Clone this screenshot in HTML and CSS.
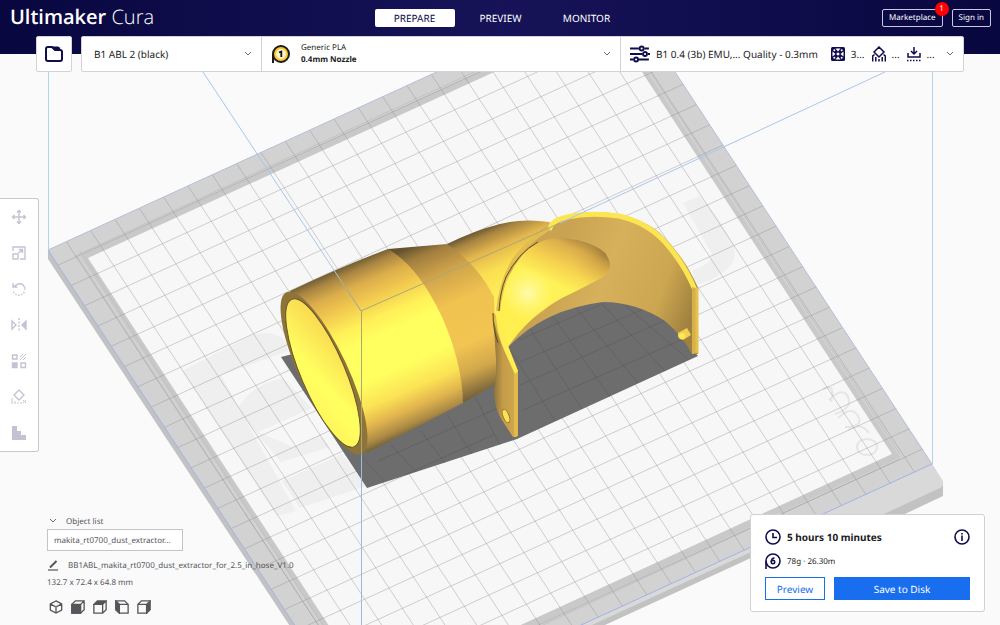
FILE: index.html
```html
<!DOCTYPE html>
<html lang="en">
<head>
<meta charset="utf-8">
<meta name="viewport" content="width=device-width, initial-scale=1">
<title>Ultimaker Cura</title>
<link rel="stylesheet" href="styles.css">
</head>
<body>
<div class="app">
  <svg class="scene" viewBox="0 0 1000 625" preserveAspectRatio="xMidYMid slice" role="img" aria-label="Build plate with a yellow dust extractor model">
    <defs>
      <path id="rows" d="M0 .75h23.5m-23.5 1h23.5m-23.5 1h23.5m-23.5 1h23.5m-23.5 1h23.5m-23.5 1h23.5m-23.5 1h23.5m-23.5 1h23.5m-23.5 1h23.5m-23.5 1h23.5m-23.5 1h23.5m-23.5 1h23.5m-23.5 1h23.5m-23.5 1h23.5m-23.5 1h23.5m-23.5 1h23.5m-23.5 1h23.5m-23.5 1h23.5m-23.5 1h23.5m-23.5 1h23.5m-23.5 1h23.5m-23.5 1h23.5m-23.5 1h23.5" vector-effect="non-scaling-stroke"/>
      <linearGradient id="tube" gradientUnits="userSpaceOnUse" x1="335" y1="270" x2="406" y2="434">
        <stop offset="0" stop-color="#6f5b32"/><stop offset=".05" stop-color="#a98542"/><stop offset=".13" stop-color="#dcae4b"/><stop offset=".22" stop-color="#f1c84f"/><stop offset=".34" stop-color="#fff058"/><stop offset=".44" stop-color="#ffff60"/><stop offset=".64" stop-color="#ffff60"/><stop offset=".78" stop-color="#fbe355"/><stop offset=".88" stop-color="#e2b54e"/><stop offset=".96" stop-color="#ad8b46"/><stop offset="1" stop-color="#7d683a"/>
      </linearGradient>
      <linearGradient id="cone" gradientUnits="userSpaceOnUse" x1="417" y1="244" x2="480" y2="394">
        <stop offset="0" stop-color="#65532f"/><stop offset=".08" stop-color="#a17e3f"/><stop offset=".22" stop-color="#cfa34b"/><stop offset=".42" stop-color="#f0c250"/><stop offset=".68" stop-color="#f2c552"/><stop offset=".85" stop-color="#d2a74b"/><stop offset="1" stop-color="#77633a"/>
      </linearGradient>
      <linearGradient id="neck" gradientUnits="userSpaceOnUse" x1="488" y1="224" x2="520" y2="300">
        <stop offset="0" stop-color="#5c4c2d"/><stop offset=".12" stop-color="#a78442"/><stop offset=".3" stop-color="#e3b64d"/><stop offset=".55" stop-color="#fbe051"/><stop offset="1" stop-color="#fff45a"/>
      </linearGradient>
      <linearGradient id="bore" gradientUnits="userSpaceOnUse" x1="298" y1="300" x2="350" y2="445">
        <stop offset="0" stop-color="#e3b54b"/><stop offset=".25" stop-color="#f8d64f"/><stop offset=".55" stop-color="#ffff60"/><stop offset=".78" stop-color="#fff45a"/><stop offset="1" stop-color="#e5bd4d"/>
      </linearGradient>
      <linearGradient id="hood" gradientUnits="userSpaceOnUse" x1="560" y1="250" x2="698" y2="300">
        <stop offset="0" stop-color="#c9a351"/><stop offset=".35" stop-color="#d6b05a"/><stop offset=".75" stop-color="#cca650"/><stop offset="1" stop-color="#a08040"/>
      </linearGradient>
      <linearGradient id="elbow" gradientUnits="userSpaceOnUse" x1="575" y1="238" x2="533" y2="330">
        <stop offset="0" stop-color="#b08a42"/><stop offset=".1" stop-color="#dcae4b"/><stop offset=".3" stop-color="#f6d24f"/><stop offset=".5" stop-color="#fff258"/><stop offset="1" stop-color="#fff04f"/>
      </linearGradient>
      <radialGradient id="shade" gradientUnits="userSpaceOnUse" cx="614" cy="250" r="44">
        <stop offset="0" stop-color="#725a30" stop-opacity=".75"/><stop offset=".5" stop-color="#b98e40" stop-opacity=".3"/><stop offset="1" stop-color="#e0b050" stop-opacity="0"/>
      </radialGradient>
      <radialGradient id="glow" gradientUnits="userSpaceOnUse" cx="528" cy="293" r="26">
        <stop offset="0" stop-color="#fffbb0"/><stop offset="1" stop-color="#fff878" stop-opacity="0"/>
      </radialGradient>
      <linearGradient id="leg" x1="0" x2="1" y1="0" y2="0">
        <stop offset="0" stop-color="#8b7038"/><stop offset=".4" stop-color="#c39b49"/><stop offset="1" stop-color="#d2a94d"/>
      </linearGradient>
    </defs>

    <!-- plate -->
    <path fill="#c2c2c2" d="M48 250v9L361 734 605 625 740 563 800 535 850 540 943 496V482L932 464z"/>
    <path fill="#d9d9d9" d="M932 464 943 481Q944 486 940 488L860 525 800 530 740 557 361 731V726z"/>
    <path fill="#d2d2d2" d="M48 250 620-12 932 464 361 726z"/>
    <path fill="none" stroke="#c9c9c9" stroke-width="7" d="M85 257 607 17 895 456 373 697z"/>
    <path fill="none" stroke="#c2c2c2" d="M75 256 609 10M80 251 373 702M900 454 611 12M373 704 900 459M77 256 370 704"/>
    <path fill="#f7f7f7" d="M88 258 608 20 892 454 373 693z"/>
    <g fill="#efefef">
      <path d="M182 371 250 336Q274 328 286 342L288 351 221 375 296 511 277 516z"/>
      <path d="M237 410Q250 385 283 378L312 408 258 432 293 447 320 435 330 447 281 462z"/>
      <path d="M282 481 342 454 366 486 300 508z"/>
      <path d="M683 203 700 196Q742 245 733 262 722 278 696 285L692 270Q711 265 712 254z"/>
    </g>
    <g fill="none" stroke="#e6e6e6" stroke-width="2">
      <path d="M823 389Q836 382 831 402M829 400Q843 386 848 397T835 414M838 418Q852 405 858 416T845 427M848 430Q860 421 869 433"/>
      <ellipse cx="867" cy="447" rx="10" ry="8"/>
    </g>
    <g transform="matrix(24.34 -11.15 13.32 20.26 48 250)" fill="none" stroke="#8e8e8e" stroke-opacity=".4" stroke-width="1">
      <use href="#rows"/>
      <use href="#rows" transform="matrix(0 1 1 0 0 0)"/>
    </g>
    <path fill="none" stroke="#a3b3e8" d="M48 250 361 726 932 464"/>
    <path fill="none" stroke="#b4bed6" d="M48 250 620-12 932 464"/>

    <!-- shadow -->
    <path fill="#6d6d6d" d="M281 357 560 285 650 300 698 356 517 439 367 488z"/>
    <path fill="none" stroke="#525252" stroke-opacity=".4" d="M361 456 384 481M391 445 416 472M420 430 445 463M447 415 472 454M475 397 500 445M511 351 555 421M530 329 582 409M552 315 610 397M575 307 638 383M601 303 665 371M625 305 688 359M378 461 500 407M405 475 495 434M520 385 690 309M520 362 660 302M523 410 690 336M519 340 600 305"/>

    <!-- tube -->
    <path fill="url(#neck)" d="M447 244Q476 230 500 224 524 218 549 222L560 228 545 300 494 345 480 300z"/>
    <path fill="url(#cone)" d="M388 249 447 244Q478 265 494 297L497 383 463 403 430 330z"/>
    <path fill="url(#tube)" d="M290 291Q340 267 388 249 418 266 442 317 462 362 463 403L367 453 310 380z"/>
    <ellipse cx="324" cy="373" rx="89" ry="24" transform="rotate(65 324 373)" fill="#8e7438"/>
    <ellipse cx="323" cy="373" rx="80" ry="22" transform="rotate(67 323 373)" fill="url(#bore)" stroke="#6b562c"/>

    <!-- hood -->
    <path fill="url(#hood)" d="M498 312Q500 285 515 258 530 238 548 225 570 212 600 212 637 214 660 233 685 257 698 288V354L692 354Q683 336 665 321 636 302 603 302 545 309 508 347z"/>
    <path fill="url(#elbow)" d="M497 313Q501 282 523 254 539 237 563 238 592 241 605 253 616 268 603 277 585 287 562 298 528 317 508 347L495 330z"/>
    <path fill="url(#shade)" d="M540 243Q551 237 563 238 592 241 605 253 616 268 603 277L560 298z"/>
    <circle cx="528" cy="293" r="26" fill="url(#glow)"/>
    <path fill="none" stroke="#fbe651" stroke-width="5" stroke-linejoin="round" d="M549 230Q552 220 567 217 590 212 619 216 646 222 664 241 684 263 695 290"/>
    <path fill="#d7b04c" d="M692 287 698 289V353L692 354z"/>
    <path fill="none" stroke="#e6c04c" stroke-width="3" d="M697 288V353"/>
    <path fill="none" stroke="#e2bd4d" stroke-width="4" d="M549 228Q526 243 514 260 501 282 498 311"/>
    <path fill="none" stroke="#5d4a26" stroke-width="1" d="M538 242Q518 253 506 277 500 292 499 311"/>
    <path fill="#f3d14e" d="M678 333 687 328 691 335 683 340Q677 339 678 333z"/>
    <circle cx="682" cy="336" r="3" fill="#ffe850"/>

    <!-- front leg -->
    <path fill="url(#leg)" d="M493 313 505 347 517 372V437H513L500 417Q494 405 494 390L497 373z"/>
    <path fill="#e0ba4a" d="M495 313 500 330 508 346 518 371V436L514 437V373L504 350Q495 330 493 316z"/>
    <path fill="#ffed52" d="M496 311 508 346 518 371 515 374 505 352Q496 332 496 311z"/>
    <path fill="none" stroke="#5d4a26" d="M493 313Q493 330 498 343"/>
    <ellipse cx="506" cy="416" rx="3" ry="7" transform="rotate(-22 506 416)" fill="#f9e352" stroke="#97793a"/>

    <!-- build volume -->
    <path fill="none" stroke="#b3d2ea" d="M48.500 72V250M932.500 72V464"/>
    <path fill="none" stroke="#aac5ec" d="M203 72 361 311M560 223 885 72"/>
    <path fill="none" stroke="#a9a878" d="M338 276 361 311 560 223M361.500 311V455"/>
    <path fill="none" stroke="#93bde4" d="M361.500 455V625"/>
  </svg>

  <header class="header">
    <h1 class="brand">Ultimaker <span class="brand-light">Cura</span></h1>
    <nav class="stages" aria-label="Stages">
      <button class="stage stage-active" type="button">PREPARE</button>
      <button class="stage" type="button">PREVIEW</button>
      <button class="stage" type="button">MONITOR</button>
    </nav>
    <div class="account">
      <button class="outline-btn" type="button">Marketplace<span class="badge">1</span></button>
      <button class="outline-btn" type="button">Sign in</button>
    </div>
  </header>

  <section class="setup" aria-label="Print setup">
    <button class="open-file" type="button" aria-label="Open file">
      <svg class="icon-folder" viewBox="0 0 20 18"><path d="M2 4Q2 2 4 2H8L11 5H16Q18 5 18 7V14Q18 16 16 16H4Q2 16 2 14z"/><path d="M8 2H14Q16 2 16 5H11z" fill="currentColor" stroke-width="1"/></svg>
    </button>
    <div class="setup-bar">
      <button class="setup-item printer" type="button">
        <span class="printer-name">B1 ABL 2 (black)</span>
        <svg class="chevron" viewBox="0 0 8 6"><path d="M1 1 4 4 7 1"/></svg>
      </button>
      <button class="setup-item material" type="button">
        <svg class="icon-spool" viewBox="0 0 20 20"><path d="M2 10V19" stroke="#1d1b18" stroke-width="2"/><circle cx="10" cy="10" r="8" fill="#ffc72e" stroke="#1d1b18" stroke-width="2"/><circle cx="10" cy="10" r="5" fill="#fff4d0" stroke="none"/><path d="M8 8.500 10.300 7.500V13" fill="none" stroke="#111" stroke-width="1.800"/></svg>
        <span class="material-text"><span>Generic PLA</span><strong>0.4mm Nozzle</strong></span>
        <svg class="chevron" viewBox="0 0 8 6"><path d="M1 1 4 4 7 1"/></svg>
      </button>
      <button class="setup-item profile" type="button">
        <svg class="icon-sliders" viewBox="0 0 18 16"><path d="M0 3H8M13 3H17M0 8H11M16 8H18M0 13H3M8 13H17"/><circle cx="10.500" cy="3" r="1.800"/><circle cx="13.500" cy="8" r="1.800"/><circle cx="5.500" cy="13" r="1.800"/></svg>
        <span class="profile-name">B1 0.4 (3b) EMU,... Quality - 0.3mm</span>
        <svg class="icon-small" viewBox="0 0 14 14"><rect width="14" height="14" rx="1.500" fill="currentColor" stroke="none"/><g fill="#fff" stroke="none"><path d="M4.500 1.500H9.500L7 4.500zM4.500 12.500H9.500L7 9.500zM1.500 4.500V9.500L4.500 7zM12.500 4.500V9.500L9.500 7z"/><path d="M7 5.200 8.800 7 7 8.800 5.200 7z"/><circle cx="3.300" cy="3.300" r="1"/><circle cx="10.700" cy="3.300" r="1"/><circle cx="3.300" cy="10.700" r="1"/><circle cx="10.700" cy="10.700" r="1"/></g></svg>
        <span class="summary">3...</span>
        <svg class="icon-small" viewBox="0 0 14 16"><path d="M7 1 12 6 7 11 2 6zM.7 15.500V10L2.500 8.500M13.300 15.500V10L11.500 8.500M3.800 11V15.500M7 13V15.500M10.200 11V15.500"/></svg>
        <span class="summary">...</span>
        <svg class="icon-small" viewBox="0 0 14 16"><path d="M7 1V8M4 5 7 8 10 5M1 7V11H13V7"/><path d="M0 14.500H14" stroke-dasharray="1.500 1.500"/></svg>
        <span class="summary">...</span>
        <svg class="chevron" viewBox="0 0 8 6"><path d="M1 1 4 4 7 1"/></svg>
      </button>
    </div>
  </section>

  <main class="workspace">
    <div class="tools" role="toolbar" aria-label="Tools">
      <button class="tool" type="button" aria-label="Move"><svg viewBox="0 0 16 16"><path d="M8 1.500V14.500M1.500 8H14.500M6 3.500 8 1.500 10 3.500M6 12.500 8 14.500 10 12.500M3.500 6 1.500 8 3.500 10M12.500 6 14.500 8 12.500 10"/></svg></button>
      <button class="tool" type="button" aria-label="Scale"><svg viewBox="0 0 16 16"><path d="M2 6V2H14V14H9M2 9H7V14H2zM7.500 8 11.500 4.500M8 4.500H11.500V8"/></svg></button>
      <button class="tool" type="button" aria-label="Rotate"><svg viewBox="0 0 16 16"><path d="M2 2V6H6.500M3 5.500Q8 1 12 4 14.500 6.500 14 9"/><path d="M13.500 11Q8 17 3 12L2 9" stroke-dasharray="1.500 1.500"/></svg></button>
      <button class="tool" type="button" aria-label="Mirror"><svg viewBox="0 0 16 16"><path d="M1 4 5 8 1 12z"/><path d="M15 4 11 8 15 12z" fill="currentColor"/><path d="M8 1V15" stroke-dasharray="2 1.500"/></svg></button>
      <button class="tool" type="button" aria-label="Per model settings"><svg viewBox="0 0 16 16"><path d="M1.500 2H6V6H1.500zM10 10H14.500V14.500H10z"/><path d="M1.500 10H6V14.500H1.500z" fill="currentColor"/><path d="M9 4 12 1M9 7 15 1M12 7 15 4" stroke-width="1"/></svg></button>
      <button class="tool" type="button" aria-label="Support blocker"><svg viewBox="0 0 16 16"><path d="M8 1 13 6 8 11 3 6z"/><path d="M1 9V15M4 12V15M7 13V15M10 13V15M12 11 15 14M15 11 12 14" stroke-width="1"/></svg></button>
      <button class="tool" type="button" aria-label="Layer steps"><svg viewBox="0 0 16 16"><path d="M1 1H6V6H10V10H15V15H1z" fill="currentColor" stroke="none"/></svg></button>
    </div>

    <div class="bottom">
      <section class="objects" aria-label="Objects">
        <button class="list-toggle" type="button"><svg class="chevron" viewBox="0 0 8 6"><path d="M1 1 4 4 7 1"/></svg>Object list</button>
        <button class="object-item" type="button">makita_rt0700_dust_extractor...</button>
        <button class="job-name" type="button"><svg class="icon-pencil" viewBox="0 0 12 12"><path d="M1 11H11" stroke-width="1.200"/><path d="M3 8.500 9.500 2" stroke-width="2"/></svg>BB1ABL_makita_rt0700_dust_extractor_for_2.5_in_hose_V1.0</button>
        <p class="dimensions">132.7 x 72.4 x 64.8 mm</p>
        <div class="views">
          <button class="view" type="button" aria-label="3D view"><svg viewBox="0 0 16 16"><path d="M8 1 14.500 4.500V11.500L8 15 1.500 11.500V4.500zM1.500 4.500 8 8 14.500 4.500M8 8V15"/></svg></button>
          <button class="view" type="button" aria-label="Front view"><svg viewBox="0 0 16 16"><path d="M1 5 5 1H15V11L11 15H1zM11 5 15 1"/><path d="M1 5H11V15H1z" fill="currentColor"/></svg></button>
          <button class="view" type="button" aria-label="Top view"><svg viewBox="0 0 16 16"><path d="M1 5V15H11L15 11V1M11 5V15"/><path d="M1 5 5 1H15L11 5z" fill="currentColor"/></svg></button>
          <button class="view" type="button" aria-label="Left view"><svg viewBox="0 0 16 16"><path d="M5 5H15V15H5L1 11V1H11L15 5"/><path d="M1 1 5 5V15L1 11z" fill="currentColor"/></svg></button>
          <button class="view" type="button" aria-label="Right view"><svg viewBox="0 0 16 16"><path d="M1 5H11V15H1zM1 5 5 1H15"/><path d="M11 5 15 1V11L11 15z" fill="currentColor"/></svg></button>
        </div>
      </section>

      <section class="result" aria-label="Slicing result">
        <div class="result-row">
          <svg class="icon-info" viewBox="0 0 16 16"><circle cx="8" cy="8" r="7"/><path d="M8 4V8.500H12"/></svg>
          <strong class="time">5 hours 10 minutes</strong>
          <button class="info" type="button" aria-label="Time details"><svg class="icon-info" viewBox="0 0 16 16"><circle cx="8" cy="8" r="7"/><path d="M8 6.500V12M8 4V5.500"/></svg></button>
        </div>
        <div class="result-row">
          <svg class="icon-info" viewBox="0 0 16 16"><circle cx="8" cy="8" r="7"/><path d="M1 8V16"/><circle cx="8" cy="9" r="1.700"/><path d="M6.300 9Q6.300 5 9.500 5"/></svg>
          <span class="usage">78g · 26.30m</span>
        </div>
        <div class="actions">
          <button class="preview" type="button">Preview</button>
          <button class="save" type="button">Save to Disk</button>
        </div>
      </section>
    </div>
  </main>
</div>
</body>
</html>
```

FILE: styles.css
```css
* {
  box-sizing: border-box;
}

body {
  margin: 0;
  font-family: "Noto Sans", "Open Sans", sans-serif;
  text-rendering: geometricPrecision;
  color: #1c1c24;
  background: #fafafa;
}

button {
  padding: 0;
  border: 0;
  background: none;
  color: inherit;
  font: inherit;
  text-rendering: inherit;
  cursor: pointer;
}

svg {
  display: block;
  flex: none;
  fill: none;
  stroke: currentColor;
}

.app {
  position: relative;
  display: flex;
  flex-direction: column;
  min-height: 100vh;
  overflow: hidden;
}

.scene {
  position: absolute;
  inset: 0;
  width: 100%;
  height: 100%;
  stroke: none;
}

.header,
.setup,
.workspace {
  position: relative;
}

.header {
  display: grid;
  grid-template-columns: 1fr auto 1fr;
  align-items: start;
  height: 54px;
  padding: 9px 9px 0 10px;
  color: #fff;
  background: linear-gradient(90deg, #08073f, #161358 50%, #08073f);
}

.brand {
  margin: 0;
  font-family: "Open Sans", "Noto Sans", sans-serif;
  font-size: 20px;
  line-height: 16px;
  font-weight: 600;
}

.brand-light {
  font-weight: 300;
}

.stages {
  display: flex;
  gap: 6px;
}

.stage {
  width: 80px;
  height: 18px;
  border-radius: 2px;
  font-size: 10px;
  line-height: 18px;
}

.stage-active {
  background: #fff;
  color: #0d0b4a;
}

.account {
  display: flex;
  justify-content: flex-end;
  gap: 9px;
}

.outline-btn {
  position: relative;
  height: 18px;
  padding: 0 6px;
  border: 1px solid #c9c9de;
  border-radius: 2px;
  font-size: 8px;
  line-height: 16px;
}

.badge {
  position: absolute;
  top: -8px;
  right: -7px;
  width: 14px;
  height: 14px;
  border-radius: 50%;
  background: #f00;
  font-size: 8px;
  line-height: 14px;
}

.setup {
  display: flex;
  gap: 9px;
  margin: -18px 36px 0;
}

.open-file,
.setup-bar {
  height: 36px;
  border: 1px solid #d2d2da;
  border-radius: 2px;
  background: #fff;
}

.open-file {
  display: grid;
  place-items: center;
  width: 36px;
  color: #100d4c;
}

.icon-folder {
  width: 20px;
  height: 18px;
  stroke-width: 2;
}

.setup-bar {
  display: grid;
  grid-template-columns: 179fr 359fr 343fr;
  flex: 1;
}

.setup-item {
  display: flex;
  align-items: center;
  min-width: 0;
  padding: 0 9px;
  font-size: 10px;
  text-align: left;
  white-space: nowrap;
}

.setup-item + .setup-item {
  border-left: 1px solid #d2d2da;
}

.setup-item.printer {
  padding-left: 12px;
}

.chevron {
  width: 8px;
  height: 6px;
  margin-left: auto;
  color: #6a6a72;
}

.icon-spool {
  width: 20px;
  height: 20px;
  margin-right: 10px;
}

.material-text {
  display: grid;
  font-size: 8px;
  line-height: 12px;
}

.icon-sliders {
  width: 20px;
  height: 18px;
  margin-right: 6px;
  color: #100d4c;
  stroke-width: 1.7;
}

.profile-name {
  margin-right: 4px;
}

.icon-small {
  width: 14px;
  height: 16px;
  margin: 0 6px 0 9px;
  color: #100d4c;
  stroke-width: 1.5;
}

.summary + .icon-small {
  margin-left: 7px;
}

.workspace {
  display: flex;
  flex: 1;
  flex-direction: column;
  align-items: flex-start;
}

.tools {
  display: flex;
  flex-direction: column;
  width: 39px;
  margin-top: 126px;
  border: 1px solid #c8c8d0;
  border-left: 0;
  border-radius: 0 3px 3px 0;
  background: #fff;
}

.tool {
  display: grid;
  place-items: center;
  height: 36px;
  color: #c4c3d4;
}

.tool svg {
  width: 16px;
  height: 16px;
  stroke-width: 1.4;
}

.bottom {
  display: flex;
  justify-content: space-between;
  align-items: flex-end;
  width: 100%;
  margin-top: auto;
  padding: 0 15px 11px 47px;
}

.objects {
  display: flex;
  flex-direction: column;
  align-items: flex-start;
  color: #55555a;
  font-size: 8px;
}

.list-toggle {
  display: flex;
  align-items: center;
  gap: 9px;
  height: 16px;
  padding-left: 2px;
}

.object-item {
  min-width: 136px;
  height: 22px;
  padding: 0 6px;
  border: 1px solid #c4c4c8;
  background: #fff;
  text-align: left;
}

.job-name {
  display: flex;
  align-items: center;
  gap: 9px;
  height: 28px;
}

.icon-pencil {
  width: 12px;
  height: 12px;
}

.dimensions {
  margin: 0;
  line-height: 8px;
}

.views {
  display: flex;
  gap: 8px;
  margin-top: 13px;
  padding: 0 2px;
}

.view svg {
  width: 14px;
  height: 14px;
  stroke-width: 1.5;
}

.result {
  width: 235px;
  margin-bottom: 2px;
  padding: 14px 14px 11px;
  border: 1px solid #d0d0d6;
  border-radius: 3px;
  background: #fff;
}

.result-row {
  display: flex;
  align-items: center;
  gap: 6px;
  height: 16px;
  margin-bottom: 8px;
}

.icon-info {
  width: 16px;
  height: 16px;
  color: #100d4c;
  stroke-width: 1.6;
}

.time {
  font-size: 10px;
}

.info {
  margin-left: auto;
}

.usage {
  font-size: 8px;
}

.actions {
  display: flex;
  gap: 9px;
}

.preview,
.save {
  height: 23px;
  border: 1px solid #196ef0;
  font-size: 10px;
}

.preview {
  width: 60px;
  color: #196ef0;
}

.save {
  flex: 1;
  background: #196ef0;
  color: #fff;
}
```
